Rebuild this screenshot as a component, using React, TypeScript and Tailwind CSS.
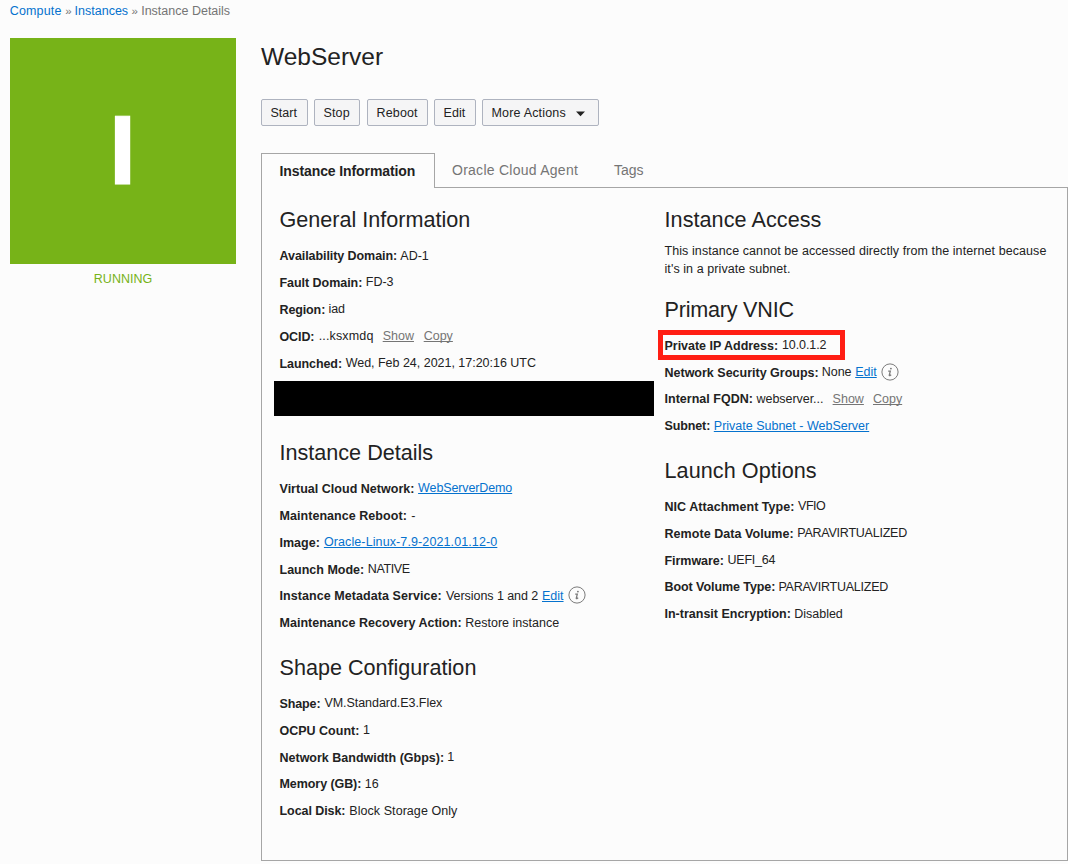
import type { ReactNode } from 'react';

function Heading({ children, className = '' }: { children: ReactNode; className?: string }) {
  return <h2 className={`text-[21.6px] leading-[25px] whitespace-nowrap ${className}`}>{children}</h2>;
}

type RowProps = {
  label: string;
  labelClass: string;
  children: ReactNode;
  raised?: boolean;
  short?: boolean;
  valueClass?: string;
};

function Row({ label, labelClass, children, raised, short, valueClass = '' }: RowProps) {
  return (
    <div className={`flex items-start whitespace-nowrap leading-[18px] ${short ? 'h-[26px]' : 'h-[27px]'}`}>
      <span className={`shrink-0 font-bold ${labelClass}`}>{label}</span>
      <span className={`flex ${raised ? '-mt-px' : ''} ${valueClass}`}>{children}</span>
    </div>
  );
}

function Cell({ children, className = '' }: { children: ReactNode; className?: string }) {
  return <span className={`shrink-0 ${className}`}>{children}</span>;
}

function Link({ children, className = '' }: { children: ReactNode; className?: string }) {
  return (
    <a className={`text-[#0572ce] underline decoration-1 underline-offset-[1px] [text-decoration-skip-ink:none] ${className}`}>
      {children}
    </a>
  );
}

function Muted({ children }: { children: ReactNode }) {
  return (
    <a className="text-[#757575] underline decoration-1 underline-offset-[1px] [text-decoration-skip-ink:none]">
      {children}
    </a>
  );
}

function Info({ className = '' }: { className?: string }) {
  return (
    <svg className={className} width="18" height="18" viewBox="0 0 18 18" fill="none" stroke="#7b7b7b">
      <circle cx="9" cy="9" r="8.1" strokeWidth="1" />
      <circle cx="9.9" cy="5.6" r="0.95" fill="#7b7b7b" stroke="none" />
      <path d="M7.2 8.2H9.3L8.3 12.1Q8.1 12.9 8.9 12.6L10.2 11.8" strokeWidth="1.3" />
    </svg>
  );
}

function Button({ children, className }: { children: ReactNode; className: string }) {
  return (
    <button
      className={`flex h-[27px] items-start rounded-[2px] border border-[#aeb3bf] bg-[#f5f5f6] pt-[4px] pl-[8.5px] leading-[18px] whitespace-nowrap ${className}`}
    >
      {children}
    </button>
  );
}

export default function App() {
  return (
    <div className="h-[864px] w-[1068px] overflow-hidden bg-[#fcfcfc] font-['Liberation_Sans',Arial,sans-serif] text-[12.5px] text-[#222222]">
      <nav className="flex h-[38px] items-start pt-[2px] pl-[9.7px] leading-[18px] whitespace-nowrap text-[#757575]">
        <a className="w-[55.6px] tracking-[0.17px] text-[#0572ce]">Compute</a>
        <span className="w-[9.3px] text-[11.5px]">»</span>
        <a className="w-[57px] text-[#0572ce]">Instances</a>
        <span className="w-[9.6px] text-[11.5px]">»</span>
        <span>Instance Details</span>
      </nav>

      <div className="flex items-start">
        <aside className="ml-[10px] w-[251px] shrink-0">
          <div className="flex h-[226px] w-[226px] items-center justify-center bg-[#77b318] pr-[1px]">
            <span className="text-[97.5px] leading-[98px] font-bold text-white [-webkit-text-stroke:1.2px_white]">I</span>
          </div>
          <div className="w-[226px] pt-[6px] text-center leading-[18px] text-[#77b318]">RUNNING</div>
        </aside>

        <main className="w-[807px] shrink-0">
          <h1 className="pt-[5px] text-[24.5px] leading-[28px] whitespace-nowrap">WebServer</h1>

          <div className="mt-[28px] flex">
            <Button className="w-[47px]">Start</Button>
            <Button className="ml-[6px] w-[46px] tracking-[0.15px]">Stop</Button>
            <Button className="ml-[7px] w-[61px] tracking-[0.15px]">Reboot</Button>
            <Button className="ml-[6px] w-[42px] tracking-[0.1px]">Edit</Button>
            <Button className="ml-[6px] w-[117px] tracking-[0.18px]">
              <span className="w-[84px] text-left">More Actions</span>
              <svg className="mt-[6.5px]" width="9" height="6" viewBox="0 0 9 6">
                <path d="M0 0.5H9L4.5 5.3Z" fill="#222222" />
              </svg>
            </Button>
          </div>

          <div className="mt-[27px] flex h-[34px] text-[14px] leading-[18px] whitespace-nowrap">
            <div className="z-10 h-[35px] w-[174px] shrink-0 border border-b-0 border-[#a6a6a6] bg-[#fcfcfc] pt-[8px] pl-[17.5px] font-bold tracking-[-0.1px]">
              Instance Information
            </div>
            <div className="w-[162px] pt-[8px] pl-[17px] tracking-[0.26px] text-[#757575]">Oracle Cloud Agent</div>
            <div className="pt-[8px] pl-[17px] text-[#757575]">Tags</div>
          </div>

          <div className="flex h-[674px] border border-[#a6a6a6] pt-[19px] pl-[17.5px]">
            <section className="w-[385px] shrink-0">
              <Heading className="mb-[15px]">General Information</Heading>
              <Row label="Availability Domain:" labelClass="w-[120.8px] tracking-[-0.07px]">AD-1</Row>
              <Row label="Fault Domain:" labelClass="w-[86.3px] tracking-[-0.04px]" raised>FD-3</Row>
              <Row label="Region:" labelClass="w-[48.9px] tracking-[-0.12px]" raised>iad</Row>
              <Row label="OCID:" labelClass="w-[39.2px] tracking-[-0.1px]" raised>
                <Cell className="w-[64px] tracking-[0.15px]">...ksxmdq</Cell>
                <Cell className="w-[41px]"><Muted>Show</Muted></Cell>
                <Muted>Copy</Muted>
              </Row>
              <Row label="Launched:" labelClass="w-[66.2px] tracking-[-0.08px]" valueClass="tracking-[-0.02px]" raised>Wed, Feb 24, 2021, 17:20:16 UTC</Row>
              <div className="-mt-px mb-[24px] -ml-[5.5px] h-[35px] w-[380px] bg-black" />

              <Heading className="mb-[15px]">Instance Details</Heading>
              <Row label="Virtual Cloud Network:" labelClass="w-[138.6px] tracking-[0.02px]" raised>
                <Link className="tracking-[-0.12px]">WebServerDemo</Link>
              </Row>
              <Row label="Maintenance Reboot:" labelClass="w-[131.8px] tracking-[0.05px]">-</Row>
              <Row label="Image:" labelClass="w-[44.4px]" raised>
                <Link className="tracking-[0.11px]">Oracle-Linux-7.9-2021.01.12-0</Link>
              </Row>
              <Row label="Launch Mode:" labelClass="w-[88.3px]" valueClass="tracking-[-0.4px]" raised short>NATIVE</Row>
              <Row label="Instance Metadata Service:" labelClass="w-[166.5px] tracking-[0.07px]">
                <Cell className="w-[96px] tracking-[-0.06px]">Versions 1 and 2</Cell>
                <Cell className="w-[26px]"><Link>Edit</Link></Cell>
                <Info className="-mt-px" />
              </Row>
              <Row label="Maintenance Recovery Action:" labelClass="w-[185.8px] tracking-[0.02px]">Restore instance</Row>

              <Heading className="mt-[14px] mb-[15px]">Shape Configuration</Heading>
              <Row label="Shape:" labelClass="w-[44.9px] tracking-[-0.12px]" valueClass="tracking-[-0.05px]" raised>VM.Standard.E3.Flex</Row>
              <Row label="OCPU Count:" labelClass="w-[83.6px]" raised>1</Row>
              <Row label="Network Bandwidth (Gbps):" labelClass="w-[167.8px]" raised short>1</Row>
              <Row label="Memory (GB):" labelClass="w-[85.2px] tracking-[-0.07px]">16</Row>
              <Row label="Local Disk:" labelClass="w-[69.8px] tracking-[-0.07px]" valueClass="tracking-[0.06px]">Block Storage Only</Row>
            </section>

            <section className="w-[400px] shrink-0">
              <Heading className="mb-[10px] tracking-[0.06px]">Instance Access</Heading>
              <p className="leading-[18px] tracking-[0.08px] whitespace-nowrap">
                This instance cannot be accessed directly from the internet because
                <br />
                it's in a private subnet.
              </p>

              <Heading className="mt-[19px] mb-[15px] tracking-[-0.22px]">Primary VNIC</Heading>
              <div className="relative">
                <Row label="Private IP Address:" labelClass="w-[117.5px] tracking-[-0.02px]" valueClass="tracking-[-0.1px]" raised>10.0.1.2</Row>
                <div className="absolute -top-[7px] -left-[6.5px] h-[30px] w-[187px] border-5 border-[#ff1e14]" />
              </div>
              <Row label="Network Security Groups:" labelClass="w-[157.2px]" raised short>
                <Cell className="w-[33.5px]">None</Cell>
                <Cell className="w-[26px]"><Link>Edit</Link></Cell>
                <Info />
              </Row>
              <Row label="Internal FQDN:" labelClass="w-[92.1px] tracking-[0.02px]">
                <Cell className="w-[76px] tracking-[-0.05px]">webserver...</Cell>
                <Cell className="w-[40.4px]"><Muted>Show</Muted></Cell>
                <Muted>Copy</Muted>
              </Row>
              <Row label="Subnet:" labelClass="w-[49.3px] tracking-[-0.12px]">
                <Link>Private Subnet - WebServer</Link>
              </Row>

              <Heading className="mt-[14px] mb-[15px] tracking-[0.07px]">Launch Options</Heading>
              <Row label="NIC Attachment Type:" labelClass="w-[133.6px] tracking-[0.04px]" valueClass="tracking-[-0.5px]" raised>VFIO</Row>
              <Row label="Remote Data Volume:" labelClass="w-[132.8px] tracking-[0.05px]" valueClass="tracking-[-0.24px]" raised>PARAVIRTUALIZED</Row>
              <Row label="Firmware:" labelClass="w-[63.1px] tracking-[-0.04px]" valueClass="tracking-[-0.25px]" raised short>UEFI_64</Row>
              <Row label="Boot Volume Type:" labelClass="w-[113.9px] tracking-[-0.07px]" valueClass="tracking-[-0.24px]">PARAVIRTUALIZED</Row>
              <Row label="In-transit Encryption:" labelClass="w-[129.7px]">Disabled</Row>
            </section>
          </div>
        </main>
      </div>
    </div>
  );
}
